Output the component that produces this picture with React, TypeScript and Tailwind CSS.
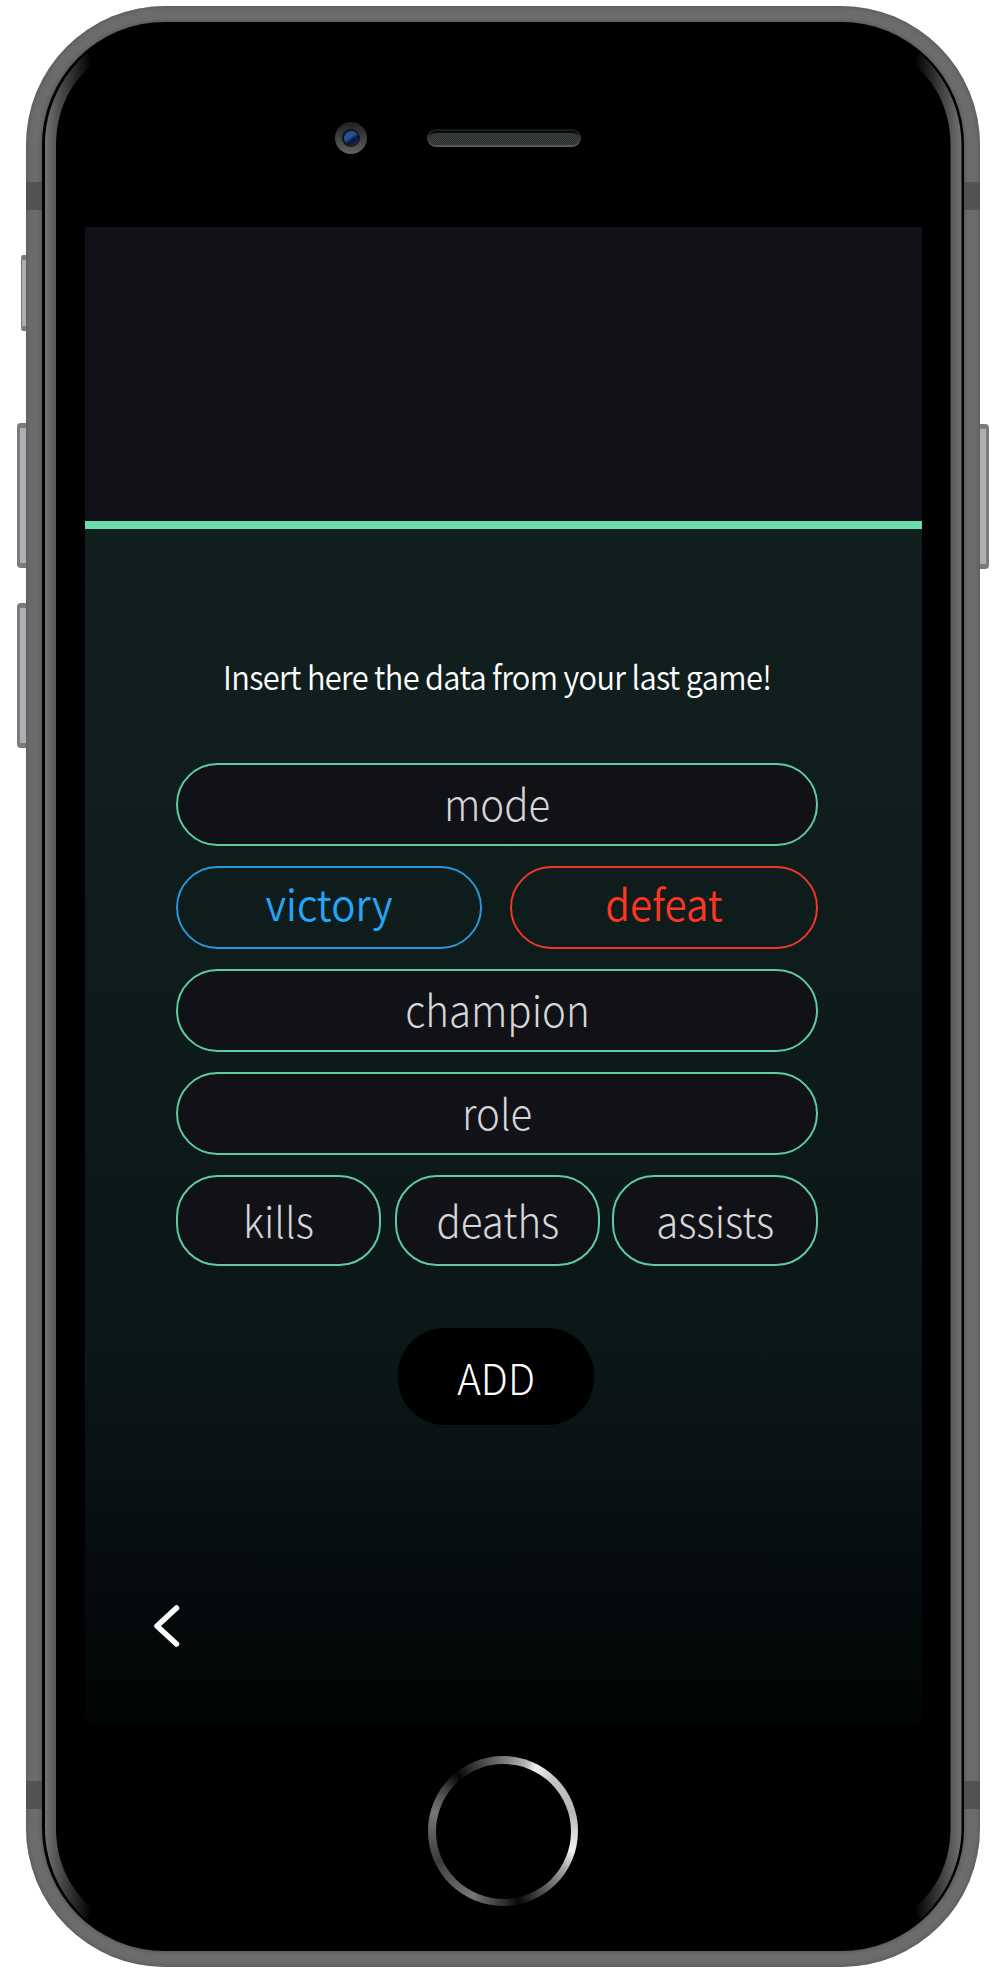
import React from "react";

const field =
  "flex items-center justify-center rounded-[42px] border-2 border-[#5fcb9f] bg-[#111217] text-[#d6d6d8]";

function Label({ children, className = "" }: { children: React.ReactNode; className?: string }) {
  return <span className={`inline-block scale-x-[0.947] whitespace-nowrap ${className}`}>{children}</span>;
}

function SideKey({ className }: { className: string }) {
  return (
    <div
      className={`absolute border-y-[5px] border-y-[#7b7b7f] bg-[#aeafb1] ${className}`}
    />
  );
}

function Bezel() {
  const edge =
    "M45 145 C45 109 61 76 87 53 L92 65 C68 85 56 114 56 145 L56 1828 C56 1859 68 1888 92 1908 L87 1920 C61 1897 45 1864 45 1828 Z";
  return (
    <svg className="pointer-events-none absolute left-0 top-0" width="1007" height="1974" aria-hidden="true">
      <defs>
        <linearGradient id="shine" gradientUnits="userSpaceOnUse" x1="45" y1="0" x2="92" y2="0">
          <stop offset="0" stopColor="#727272" />
          <stop offset="0.22" stopColor="#585858" />
          <stop offset="0.6" stopColor="#2c2c2c" />
          <stop offset="1" stopColor="#000" />
        </linearGradient>
      </defs>
      <path d={edge} fill="url(#shine)" />
      <path d={edge} fill="url(#shine)" transform="translate(1006.5 0) scale(-1 1)" />
    </svg>
  );
}

function Camera() {
  return (
    <div className="flex h-8 w-8 items-center justify-center rounded-full bg-linear-to-b from-[#1d2021] to-[#626464]">
      <div className="flex h-[18px] w-[18px] items-center justify-center rounded-full bg-[#101214]">
        <div className="h-[15px] w-[15px] rounded-full bg-[linear-gradient(145deg,#294f91_0%,#294f91_40%,#0b1630_60%,#1c386b_95%)]" />
      </div>
    </div>
  );
}

function Speaker() {
  return (
    <div className="h-[18px] w-[154px] rounded-full bg-linear-to-b from-[#151818] to-[#5c5e5e] p-[2px]">
      <div className="h-[14px] rounded-full border-t-2 border-[#080a0a] bg-[#37393a] bg-[repeating-conic-gradient(#2b2d2e_0%_25%,#3f4142_0%_50%)] bg-[length:2px_2px]" />
    </div>
  );
}

export default function App() {
  return (
    <div className="relative h-[1974px] w-[1007px] overflow-hidden bg-white pl-[26px] pt-[6px] [font-family:'Noto_Sans_CJK_SC',sans-serif]">
      <SideKey className="left-[21px] top-[255px] h-[76px] w-[6px] rounded-l-[2px] border-l border-l-[#757579]" />
      <SideKey className="left-[17px] top-[423px] h-[145px] w-[10px] rounded-l-[4px] border-l-[3px] border-l-[#7b7b7f]" />
      <SideKey className="left-[17px] top-[603px] h-[145px] w-[10px] rounded-l-[4px] border-l-[3px] border-l-[#7b7b7f]" />
      <SideKey className="left-[979px] top-[424px] h-[145px] w-[10px] rounded-r-[4px] border-r-[3px] border-r-[#7b7b7f]" />

      <main className="relative h-[1961px] w-[954px] rounded-[139px] bg-[#6c6c6e] p-4 shadow-[inset_0_0_5px_#505052]">
        <div className="absolute left-0 top-[176px] h-7 w-full bg-[#505254]" />
        <div className="absolute left-0 top-[1775px] h-7 w-full bg-[#505254]" />
        <div className="relative flex h-[1929px] w-[922px] flex-col rounded-[123px] bg-black px-[43px] shadow-[0_0_4px_#4c4c4e]">
          <div className="flex h-[205px] shrink-0 items-start pl-[250px] pt-[100px]">
            <Camera />
            <div className="ml-[60px] pt-[7px]">
              <Speaker />
            </div>
          </div>

          <section className="flex h-[1496px] w-[837px] shrink-0 flex-col bg-[linear-gradient(to_bottom,#11201f_302px,#0b1717_1130px,#0a1214_1230px,#010506_1470px,#010405_100%)]">
            <header className="h-[302px] shrink-0 border-b-8 border-[#68ddaa] bg-[#111217]" />
            <p className="ml-[138px] mt-[122px] h-[50px] text-[32.5px] font-[350] leading-[50px] tracking-[-0.7px] text-white">
              <Label className="origin-left">Insert here the data from your last game!</Label>
            </p>

            <form className="ml-[91px] mt-[62px] flex w-[642px] flex-col gap-[20px] text-[42.5px] font-light leading-none">
              <div className={`${field} h-[83px] pb-[3px]`}>
                <Label>mode</Label>
              </div>
              <div className="flex h-[83px] justify-between font-[350]">
                <div className="flex w-[306px] items-center justify-center rounded-[42px] border-2 border-[#2897db] pb-[8px] text-[#22a7f7]">
                  <Label>victory</Label>
                </div>
                <div className="flex w-[308px] items-center justify-center rounded-[42px] border-2 border-[#ed3828] pb-[8px] text-[#ff3524]">
                  <Label>defeat</Label>
                </div>
              </div>
              <div className={`${field} h-[83px] pb-[3px]`}>
                <Label>champion</Label>
              </div>
              <div className={`${field} h-[83px] pb-[3px]`}>
                <Label>role</Label>
              </div>
              <div className="flex h-[91px]">
                <div className={`${field} mr-[14px] w-[205px]`}>
                  <Label>kills</Label>
                </div>
                <div className={`${field} mr-[12px] w-[205px]`}>
                  <Label>deaths</Label>
                </div>
                <div className={`${field} w-[206px]`}>
                  <Label>assists</Label>
                </div>
              </div>
            </form>

            <button className="ml-[313px] mt-[62px] flex h-[97px] w-[196px] items-center justify-center rounded-[47px] bg-black pt-[2px] text-[42.5px] font-light leading-none text-white">
              <Label>ADD</Label>
            </button>

            <button aria-label="Back" className="ml-[66px] mt-[177px] h-[48px] w-[32px]">
              <svg width="32" height="48" viewBox="0 0 32 48" fill="none">
                <path d="M25.5 6 L6 24 L25.5 42" stroke="white" strokeWidth="5.5" strokeLinecap="round" strokeLinejoin="round" />
              </svg>
            </button>
          </section>

          <div className="ml-[343px] mt-[33px] h-[150px] w-[150px] rounded-full bg-[conic-gradient(#777_0deg,#bbb_20deg,#f2f2f2_27deg,#c4c4c6_45deg,#b8b8ba_75deg,#f4f4f4_106deg,#aaa_120deg,#555_145deg,#080808_168deg,#333_180deg,#777_205deg,#555_230deg,#3b3b3b_245deg,#777_285deg,#444_305deg,#050505_321deg,#333_335deg,#777_360deg)] p-[7.5px]">
            <div className="h-full w-full rounded-full bg-black" />
          </div>
        </div>
      </main>
      <Bezel />
    </div>
  );
}
